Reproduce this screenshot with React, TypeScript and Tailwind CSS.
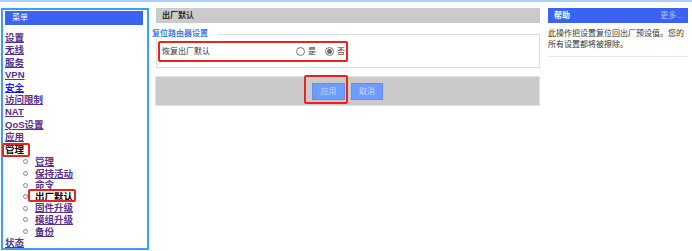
const PURPLE = "text-[#58308e] underline";
const BLUE = "text-[#1b1bf0] underline";
const BLACK = "text-black";

const mainTop: [string, string][] = [
  ["设置", PURPLE],
  ["无线", PURPLE],
  ["服务", PURPLE],
  ["VPN", PURPLE],
  ["安全", BLUE],
  ["访问限制", PURPLE],
  ["NAT", PURPLE],
  ["QoS设置", PURPLE],
  ["应用", PURPLE],
];

const subItems: [string, string, boolean][] = [
  ["管理", PURPLE, false],
  ["保持活动", PURPLE, false],
  ["命令", PURPLE, false],
  ["出厂默认", BLACK, true],
  ["固件升级", PURPLE, false],
  ["模组升级", PURPLE, false],
  ["备份", PURPLE, false],
];

function Radio({ checked }: { checked: boolean }) {
  return (
    <span className="inline-flex w-[9px] h-[9px] rounded-full border border-[#7a7a7a] bg-white items-center justify-center">
      {checked && <span className="w-[5px] h-[5px] rounded-full bg-[#6f6f6f]" />}
    </span>
  );
}

export default function App() {
  return (
    <div className="w-[692px] h-[251px] bg-white overflow-hidden font-['Liberation_Sans','Noto_Sans_CJK_SC',sans-serif]">
      <div className="h-[2px] bg-[#aacff3]" />
      <div className="flex items-start pt-[6px]">
        {/* Left menu */}
        <aside className="ml-[1px] w-[148px] h-[242px] border-2 border-[#3d9cff] shrink-0">
          <div className="mt-[1px] ml-[2px] w-[138px] h-[14px] bg-[#3a63f2] text-white text-[8px] leading-[14px] pl-[7px]">
            菜单
          </div>
          <ul className="mt-[7px] pl-[2px] text-[9.5px] font-bold leading-[12.4px]">
            {mainTop.map(([label, cls]) => (
              <li key={label}>
                <span className={cls}>{label}</span>
              </li>
            ))}
            <li>
              <span className="relative inline-block text-black">
                管理
                <span className="absolute -left-[3px] -right-[6px] -top-[1px] -bottom-[1px] border-2 border-[#e8241c] rounded-[2px]" />
              </span>
              <ul className="leading-[11.6px]">
                {subItems.map(([label, cls, boxed]) => (
                  <li key={label} className="flex items-center">
                    <span className="ml-[18px] w-[5px] h-[5px] rounded-full border border-[#8a8a8a]" />
                    <span className={"ml-[7px] " + cls}>
                      {boxed ? (
                        <span className="relative inline-block">
                          {label}
                          <span className="absolute -left-[7px] -right-[3px] -top-[2px] bottom-0 border-2 border-[#e8241c] rounded-[2px]" />
                        </span>
                      ) : (
                        label
                      )}
                    </span>
                  </li>
                ))}
              </ul>
            </li>
            <li>
              <span className={PURPLE}>状态</span>
            </li>
          </ul>
        </aside>

        {/* Main content */}
        <main className="ml-[6px] w-[385px] shrink-0">
          <div className="ml-[1px] h-[15px] bg-[#cbcbcb] text-[8px] leading-[15px] font-bold text-[#2a2a2a] pl-[6px]">
            出厂默认
          </div>
          <fieldset className="mt-[6px] ml-[1px] border border-[#dedede] pb-[5px]">
            <legend className="-ml-[5px] pr-[10px] text-[8px] leading-[10px] font-bold text-[#3f7fe0]">
              复位路由器设置
            </legend>
            <div className="mt-[2px] ml-[1px] w-[190px] h-[21px] border-2 border-[#e8241c] rounded-[2px] flex items-center pl-[2px] pr-[1px] text-[8px] text-[#333]">
              <span className="flex-1">恢复出厂默认</span>
              <span className="flex items-center">
                <Radio checked={false} />
                <span className="ml-[3px]">是</span>
              </span>
              <span className="flex items-center ml-[9px]">
                <Radio checked={true} />
                <span className="ml-[3px]">否</span>
              </span>
            </div>
          </fieldset>
          <div className="mt-[8px] h-[30px] bg-[#cacaca] border border-[#e2e2e2] flex items-center justify-center gap-[6px]">
            <span className="relative inline-flex">
              <button className="w-[33px] h-[17px] bg-[#6c9cff] border border-[#5f8fef] text-[#c9d8ff] text-[8px] leading-[15px]">
                应用
              </button>
              <span className="absolute -left-[8px] -right-[3px] -top-[8px] -bottom-[4px] border-2 border-[#e8241c] rounded-[2px]" />
            </span>
            <button className="w-[32px] h-[17px] bg-[#6c9cff] border border-[#5f8fef] text-[#c9d8ff] text-[8px] leading-[15px]">
              取消
            </button>
          </div>
        </main>

        {/* Help */}
        <div className="ml-[8px] w-[140px] shrink-0">
          <div className="h-[15px] bg-[#3a63f2] flex items-center justify-between pl-[6px] pr-[5px] text-[8px]">
            <span className="font-bold text-white">帮助</span>
            <span className="text-[#aab9ff]">更多...</span>
          </div>
          <p className="mt-[5px] text-[8px] leading-[11px] text-[#333] pb-[6px] border-b border-[#e6e6e6]">
            此操作把设置复位回出厂预设值。您的
            <br />
            所有设置都将被擦除。
          </p>
        </div>
      </div>
    </div>
  );
}
